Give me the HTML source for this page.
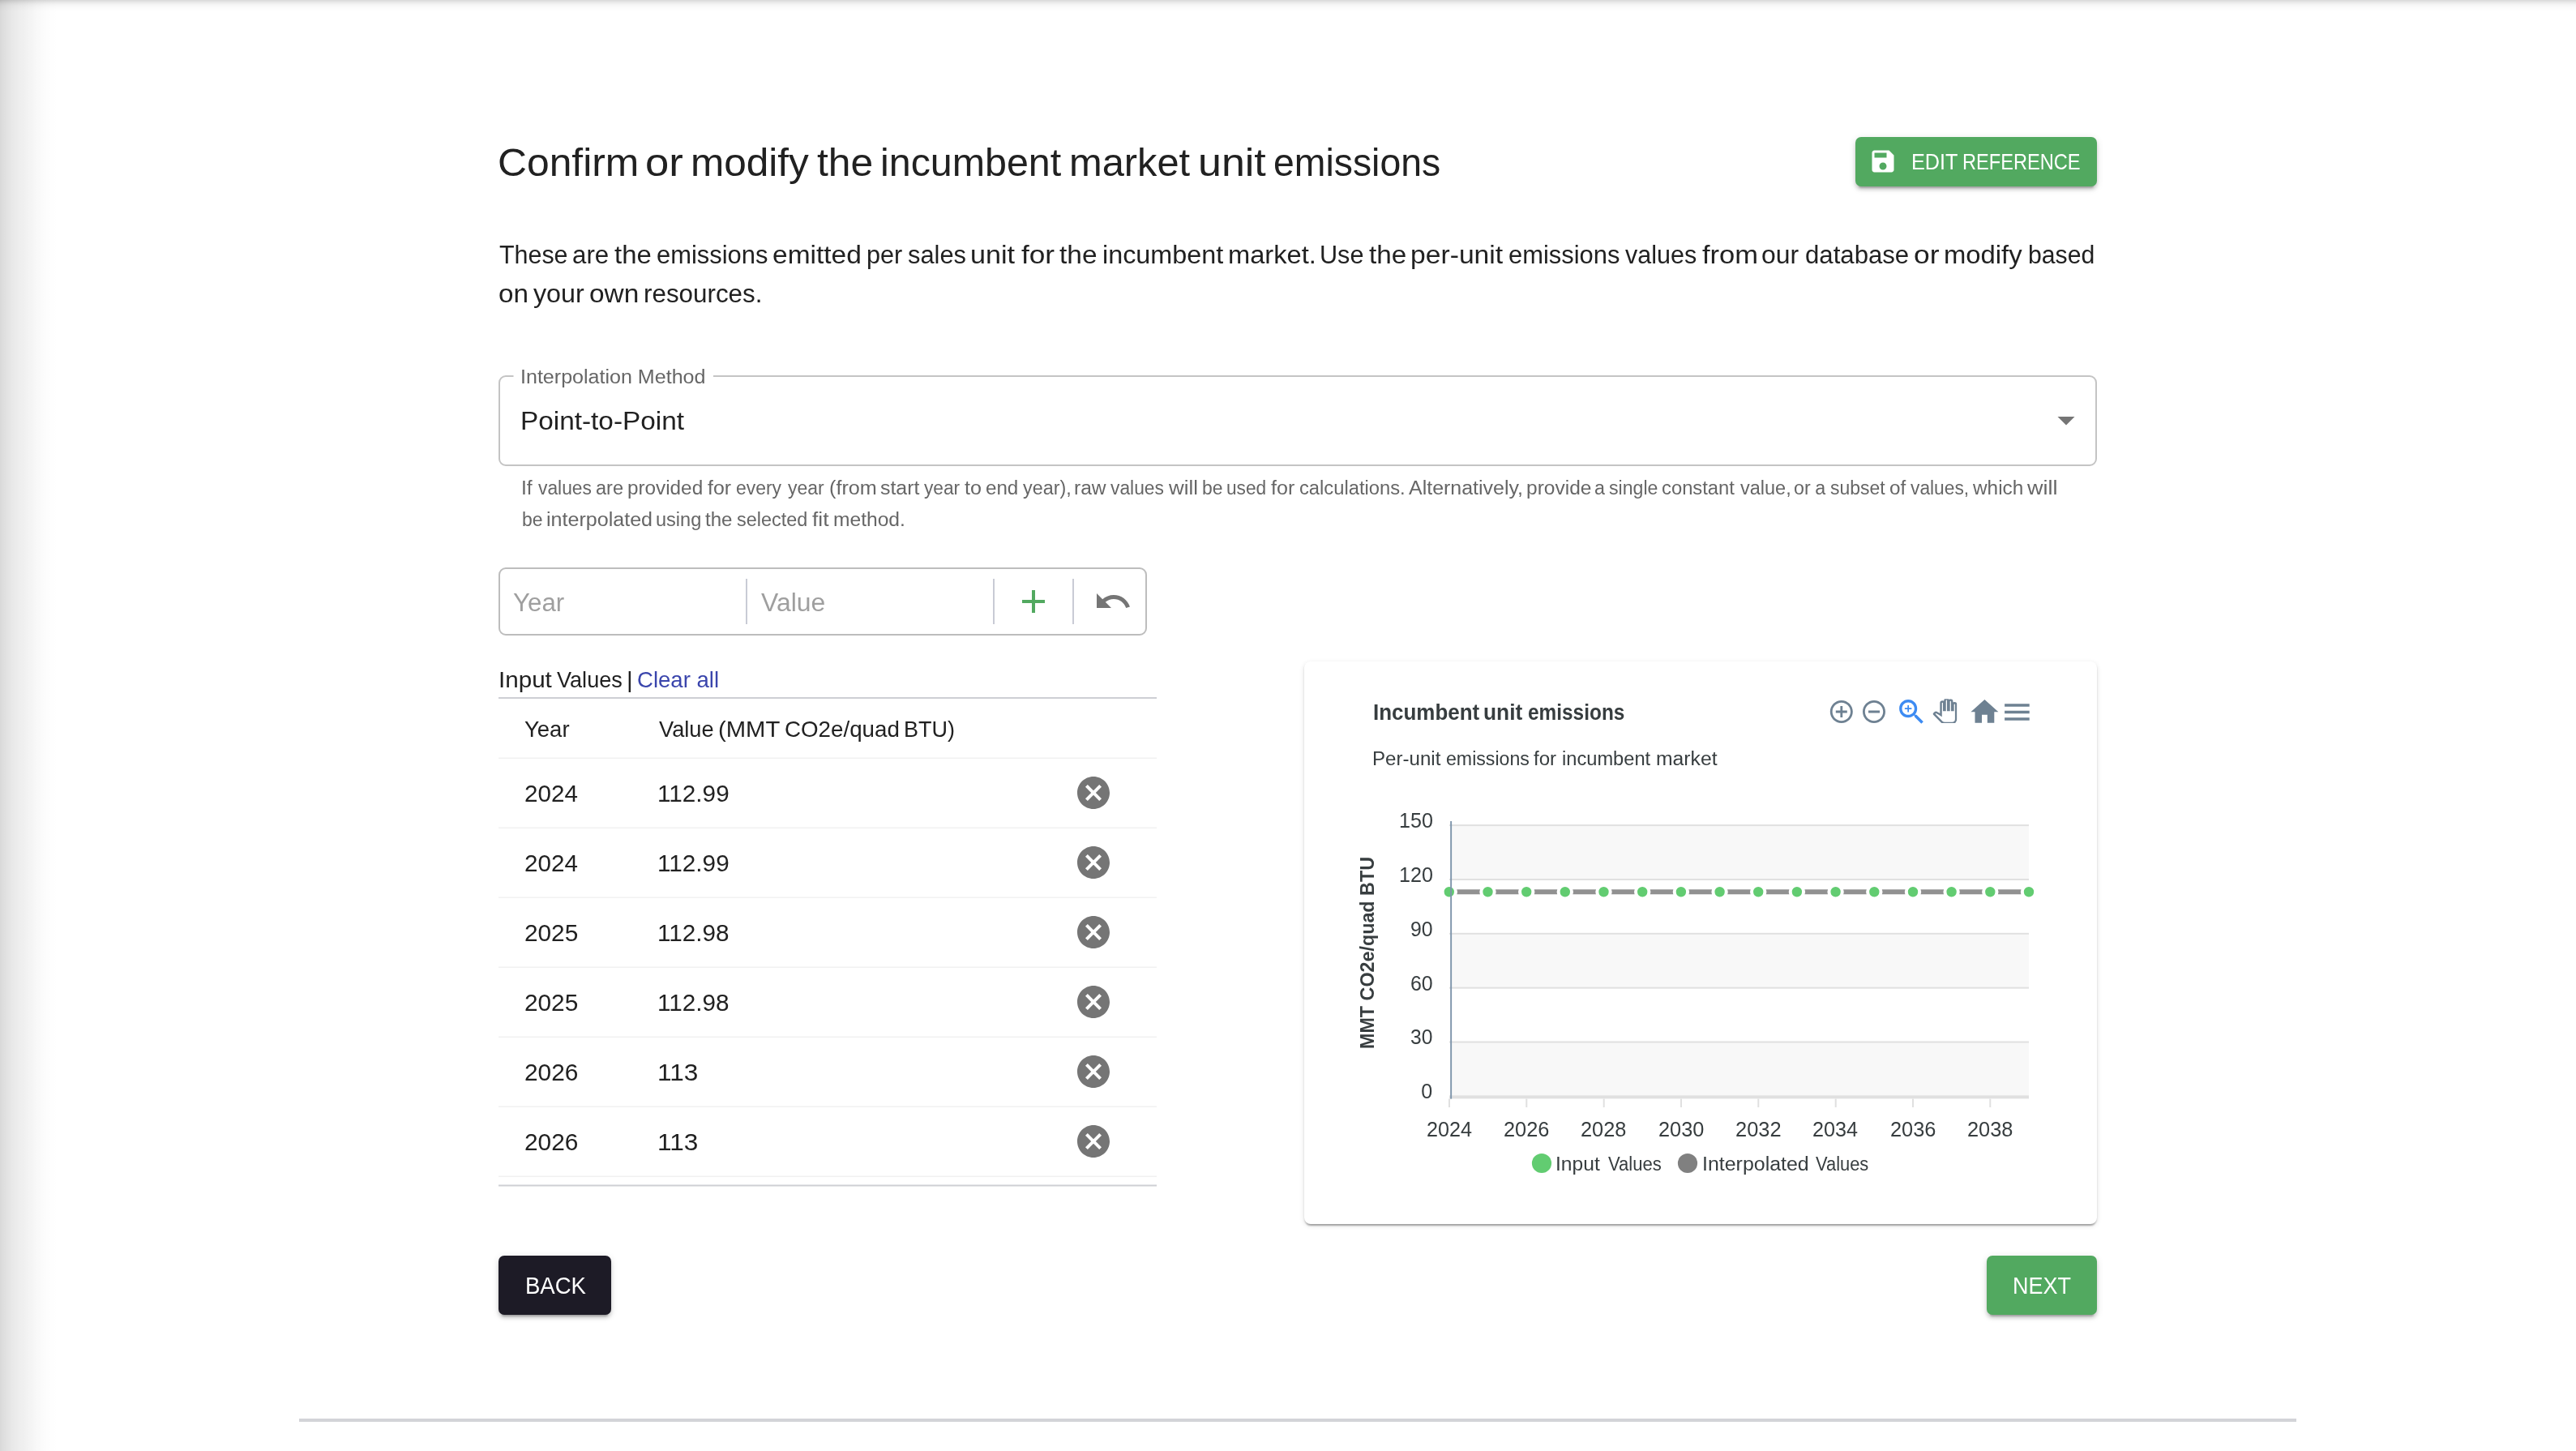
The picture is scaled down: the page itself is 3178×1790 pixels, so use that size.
<!DOCTYPE html>
<html lang="en"><head><meta charset="utf-8"><title>Incumbent market unit emissions</title>
<style>
html,body{margin:0;padding:0;background:#fff;}
body{width:3178px;height:1790px;position:relative;overflow:hidden;font-family:"Liberation Sans", sans-serif;}
.t{position:absolute;white-space:pre;line-height:1;transform-origin:0 0;}
.abs{position:absolute;}
.g{display:contents;margin:0;padding:0;font:inherit;}
#lsh{left:0;top:0;width:80px;height:1790px;background:linear-gradient(to right,rgba(0,0,0,0.1529) 0px,rgba(0,0,0,0.1255) 5px,rgba(0,0,0,0.1098) 10px,rgba(0,0,0,0.0902) 15px,rgba(0,0,0,0.0784) 20px,rgba(0,0,0,0.0667) 25px,rgba(0,0,0,0.0588) 30px,rgba(0,0,0,0.0471) 35px,rgba(0,0,0,0.0392) 40px,rgba(0,0,0,0.0275) 45px,rgba(0,0,0,0.0196) 50px,rgba(0,0,0,0.0118) 55px,rgba(0,0,0,0.0078) 60px,rgba(0,0,0,0.0039) 65px,rgba(0,0,0,0.0000) 72px);}
#tsh{left:0;top:0;width:3178px;height:16px;background:linear-gradient(to bottom,rgba(0,0,0,0.1529) 0px,rgba(0,0,0,0.1294) 1px,rgba(0,0,0,0.1059) 2px,rgba(0,0,0,0.0863) 3px,rgba(0,0,0,0.0667) 4px,rgba(0,0,0,0.0510) 5px,rgba(0,0,0,0.0392) 6px,rgba(0,0,0,0.0314) 7px,rgba(0,0,0,0.0235) 8px,rgba(0,0,0,0.0196) 9px,rgba(0,0,0,0.0157) 10px,rgba(0,0,0,0.0118) 11px,rgba(0,0,0,0.0078) 12px,rgba(0,0,0,0.0039) 13px,rgba(0,0,0,0.0000) 15px);}
.btn{border-radius:7px;box-shadow:0 6px 2px -4px rgba(0,0,0,.2),0 4px 4px 0 rgba(0,0,0,.14),0 2px 10px 0 rgba(0,0,0,.12);}
#card{left:1609px;top:815.5px;width:978px;height:694.5px;border-radius:8px;background:#fff;box-shadow:0 4px 2px -2px rgba(0,0,0,.2),0 2px 2px 0 rgba(0,0,0,.14),0 2px 6px 0 rgba(0,0,0,.12);}
svg{position:absolute;left:0;top:0;}
#txt{position:absolute;left:0;top:0;width:3178px;height:1790px;will-change:transform;}
</style></head>
<body>
<div class="abs" id="lsh"></div>
<div class="abs" id="tsh"></div>
<div class="abs btn" style="left:2289px;top:169px;width:298px;height:61px;background:#52a960"></div>
<div class="abs btn" style="left:615px;top:1549px;width:139px;height:73px;background:#1d1b26"></div>
<div class="abs btn" style="left:2451px;top:1549px;width:136px;height:73px;background:#52a960"></div>
<div class="abs" id="card"></div>
<svg width="3178" height="1790" viewBox="0 0 3178 1790">
<path d="M633.5 464 H624 a8 8 0 0 0 -8 8 V566 a8 8 0 0 0 8 8 H2578 a8 8 0 0 0 8 -8 V472 a8 8 0 0 0 -8 -8 H880" fill="none" stroke="#c4c4c4" stroke-width="2"/>
<path d="M2538.5 514 h21 l-10.5 10.5 z" fill="#757575"/>
<rect x="616" y="701" width="798" height="82" rx="8" fill="none" stroke="#bdbdbd" stroke-width="2"/>
<rect x="920" y="714" width="2" height="56" fill="#c9cbd5"/>
<rect x="1225" y="714" width="2" height="56" fill="#c9cbd5"/>
<rect x="1323" y="714" width="2" height="56" fill="#c9cbd5"/>
<path transform="translate(1251 718) scale(2)" d="M19 13h-6v6h-2v-6H5v-2h6V5h2v6h6v2z" fill="#52a960"/>
<path transform="translate(1349 718) scale(2)" d="M12.5 8c-2.65 0-5.05.99-6.9 2.6L2 7v9h9l-3.62-3.62c1.39-1.16 3.16-1.88 5.12-1.88 3.54 0 6.55 2.31 7.6 5.5l2.37-.78C21.08 11.03 17.15 8 12.5 8z" fill="#757575"/>
<rect x="615" y="860" width="812" height="2" fill="#cecfd4"/>
<rect x="615" y="1461.5" width="812" height="2" fill="#cecfd4"/>
<rect x="615" y="934.5" width="812" height="1.5" fill="#f1f1f1"/>
<rect x="615" y="1020.5" width="812" height="1.5" fill="#f1f1f1"/>
<rect x="615" y="1106.5" width="812" height="1.5" fill="#f1f1f1"/>
<rect x="615" y="1192.5" width="812" height="1.5" fill="#f1f1f1"/>
<rect x="615" y="1278.5" width="812" height="1.5" fill="#f1f1f1"/>
<rect x="615" y="1364.5" width="812" height="1.5" fill="#f1f1f1"/>
<rect x="615" y="1450.5" width="812" height="1.5" fill="#f1f1f1"/>
<path transform="translate(1325 954) scale(2)" d="M12 2C6.47 2 2 6.47 2 12s4.47 10 10 10 10-4.47 10-10S17.53 2 12 2zm5 13.59L15.59 17 12 13.41 8.41 17 7 15.59 10.59 12 7 8.41 8.41 7 12 10.59 15.59 7 17 8.41 13.41 12 17 15.59z" fill="#757575"/>
<path transform="translate(1325 1040) scale(2)" d="M12 2C6.47 2 2 6.47 2 12s4.47 10 10 10 10-4.47 10-10S17.53 2 12 2zm5 13.59L15.59 17 12 13.41 8.41 17 7 15.59 10.59 12 7 8.41 8.41 7 12 10.59 15.59 7 17 8.41 13.41 12 17 15.59z" fill="#757575"/>
<path transform="translate(1325 1126) scale(2)" d="M12 2C6.47 2 2 6.47 2 12s4.47 10 10 10 10-4.47 10-10S17.53 2 12 2zm5 13.59L15.59 17 12 13.41 8.41 17 7 15.59 10.59 12 7 8.41 8.41 7 12 10.59 15.59 7 17 8.41 13.41 12 17 15.59z" fill="#757575"/>
<path transform="translate(1325 1212) scale(2)" d="M12 2C6.47 2 2 6.47 2 12s4.47 10 10 10 10-4.47 10-10S17.53 2 12 2zm5 13.59L15.59 17 12 13.41 8.41 17 7 15.59 10.59 12 7 8.41 8.41 7 12 10.59 15.59 7 17 8.41 13.41 12 17 15.59z" fill="#757575"/>
<path transform="translate(1325 1298) scale(2)" d="M12 2C6.47 2 2 6.47 2 12s4.47 10 10 10 10-4.47 10-10S17.53 2 12 2zm5 13.59L15.59 17 12 13.41 8.41 17 7 15.59 10.59 12 7 8.41 8.41 7 12 10.59 15.59 7 17 8.41 13.41 12 17 15.59z" fill="#757575"/>
<path transform="translate(1325 1384) scale(2)" d="M12 2C6.47 2 2 6.47 2 12s4.47 10 10 10 10-4.47 10-10S17.53 2 12 2zm5 13.59L15.59 17 12 13.41 8.41 17 7 15.59 10.59 12 7 8.41 8.41 7 12 10.59 15.59 7 17 8.41 13.41 12 17 15.59z" fill="#757575"/>
<rect x="369" y="1750" width="2464" height="4" fill="#d3d4d8"/>
<path transform="translate(2305 181.1) scale(1.5)" d="M17 3H5c-1.11 0-2 .9-2 2v14c0 1.1.89 2 2 2h14c1.1 0 2-.9 2-2V7l-4-4zm-5 16c-1.66 0-3-1.34-3-3s1.34-3 3-3 3 1.34 3 3-1.34 3-3 3zm3-10H5V5h10v4z" fill="#fff"/>
<rect x="1790" y="1018.1" width="713" height="66.85" fill="#f8f8f8"/>
<rect x="1790" y="1151.8" width="713" height="66.85" fill="#f8f8f8"/>
<rect x="1790" y="1285.5" width="713" height="66.85" fill="#f8f8f8"/>
<rect x="1788" y="1017.1" width="715" height="2" fill="#e0e0e0"/>
<rect x="1788" y="1083.95" width="715" height="2" fill="#e0e0e0"/>
<rect x="1788" y="1150.8" width="715" height="2" fill="#e0e0e0"/>
<rect x="1788" y="1217.65" width="715" height="2" fill="#e0e0e0"/>
<rect x="1788" y="1284.5" width="715" height="2" fill="#e0e0e0"/>
<rect x="1788" y="1351.35" width="715" height="4" fill="#e0e0e0"/>
<rect x="1787.0" y="1355.5" width="2" height="10.5" fill="#e0e0e0"/>
<rect x="1882.3" y="1355.5" width="2" height="10.5" fill="#e0e0e0"/>
<rect x="1977.7" y="1355.5" width="2" height="10.5" fill="#e0e0e0"/>
<rect x="2073.0" y="1355.5" width="2" height="10.5" fill="#e0e0e0"/>
<rect x="2168.3" y="1355.5" width="2" height="10.5" fill="#e0e0e0"/>
<rect x="2263.7" y="1355.5" width="2" height="10.5" fill="#e0e0e0"/>
<rect x="2359.0" y="1355.5" width="2" height="10.5" fill="#e0e0e0"/>
<rect x="2454.3" y="1355.5" width="2" height="10.5" fill="#e0e0e0"/>
<rect x="1788" y="1097.25" width="715" height="6" fill="#919191"/>
<circle cx="1787.8" cy="1100.25" r="8.2" fill="#62cc71" stroke="#fff" stroke-width="4"/>
<circle cx="1835.5" cy="1100.25" r="8.2" fill="#62cc71" stroke="#fff" stroke-width="4"/>
<circle cx="1883.2" cy="1100.25" r="8.2" fill="#62cc71" stroke="#fff" stroke-width="4"/>
<circle cx="1930.8" cy="1100.25" r="8.2" fill="#62cc71" stroke="#fff" stroke-width="4"/>
<circle cx="1978.5" cy="1100.25" r="8.2" fill="#62cc71" stroke="#fff" stroke-width="4"/>
<circle cx="2026.2" cy="1100.25" r="8.2" fill="#62cc71" stroke="#fff" stroke-width="4"/>
<circle cx="2073.9" cy="1100.25" r="8.2" fill="#62cc71" stroke="#fff" stroke-width="4"/>
<circle cx="2121.6" cy="1100.25" r="8.2" fill="#62cc71" stroke="#fff" stroke-width="4"/>
<circle cx="2169.2" cy="1100.25" r="8.2" fill="#62cc71" stroke="#fff" stroke-width="4"/>
<circle cx="2216.9" cy="1100.25" r="8.2" fill="#62cc71" stroke="#fff" stroke-width="4"/>
<circle cx="2264.6" cy="1100.25" r="8.2" fill="#62cc71" stroke="#fff" stroke-width="4"/>
<circle cx="2312.3" cy="1100.25" r="8.2" fill="#62cc71" stroke="#fff" stroke-width="4"/>
<circle cx="2360.0" cy="1100.25" r="8.2" fill="#62cc71" stroke="#fff" stroke-width="4"/>
<circle cx="2407.6" cy="1100.25" r="8.2" fill="#62cc71" stroke="#fff" stroke-width="4"/>
<circle cx="2455.3" cy="1100.25" r="8.2" fill="#62cc71" stroke="#fff" stroke-width="4"/>
<circle cx="2503.0" cy="1100.25" r="8.2" fill="#62cc71" stroke="#fff" stroke-width="4"/>
<rect x="1789.2" y="1013" width="1.9" height="342.6" fill="#7e95ab"/>
<circle cx="1902" cy="1435" r="12.1" fill="#62cc71"/>
<circle cx="2082" cy="1435" r="12.1" fill="#808080"/>
<g transform="translate(2271.8 878) scale(1.4) translate(-12 -12)"><path fill="#6e8192" d="M13 7h-2v4H7v2h4v4h2v-4h4v-2h-4V7zm-1-5C6.48 2 2 6.48 2 12s4.48 10 10 10 10-4.48 10-10S17.52 2 12 2zm0 18c-4.41 0-8-3.59-8-8s3.59-8 8-8 8 3.59 8 8-3.59 8-8 8z"/></g>
<g transform="translate(2312 878) scale(1.4) translate(-12 -12)"><path fill="#6e8192" d="M7 11v2h10v-2H7zm5-9C6.48 2 2 6.48 2 12s4.48 10 10 10 10-4.48 10-10S17.52 2 12 2zm0 18c-4.41 0-8-3.59-8-8s3.59-8 8-8 8 3.59 8 8-3.59 8-8 8z"/></g>
<g transform="translate(2358.4 878.4) scale(1.7) translate(-12 -12)"><path fill="#3d8bf2" d="M15.5 14h-.79l-.28-.27C15.41 12.59 16 11.11 16 9.5 16 5.91 13.09 3 9.5 3S3 5.91 3 9.5 5.91 16 9.5 16c1.61 0 3.09-.59 4.23-1.57l.27.28v.79l5 4.99L20.49 19l-4.99-5zm-6 0C7.01 14 5 11.99 5 9.5S7.01 5 9.5 5 14 7.01 14 9.5 11.99 14 9.5 14z"/><path fill="#3d8bf2" d="M12 10h-2v2H9v-2H7V9h2V7h1v2h2v1z"/></g>
<g transform="translate(2399.5 877.2) scale(1.24) translate(-12 -12)"><clipPath id="hc"><path d="M0 0h24v24H0z"/></clipPath><path clip-path="url(#hc)" fill="#fff" stroke="#6e8192" stroke-width="2" d="M23 5.5V20c0 2.2-1.8 4-4 4h-7.3c-1.08 0-2.1-.43-2.85-1.19L1 14.83s1.26-1.23 1.3-1.25c.22-.19.49-.29.79-.29.22 0 .42.06.6.16.04.01 4.31 2.46 4.31 2.46V4c0-.83.67-1.5 1.5-1.5S11 3.17 11 4v7h1V1.5c0-.83.67-1.5 1.5-1.5S15 .67 15 1.5V11h1V2.5c0-.83.67-1.5 1.5-1.5s1.5.67 1.5 1.5V11h1V5.5c0-.83.67-1.5 1.5-1.5s1.5.67 1.5 1.5z"/></g>
<g transform="translate(2448.4 878.25) scale(1.7) translate(-12 -12)"><path fill="#6e8192" d="M10 20v-6h4v6h5v-8h3L12 3 2 12h3v8z"/></g>
<g transform="translate(2488.4 878.45) scale(1.7) translate(-12 -12)"><path fill="#6e8192" d="M3 18h18v-2H3v2zm0-5h18v-2H3v2zm0-7v2h18V6H3z"/></g>
</svg>
<div id="txt">
<h1 class="g title">
<span class="t" style="left:614.47px;top:177px;font-size:48.0px;color:#212121;transform:scaleX(1.0374)">Confirm </span>
<span class="t" style="left:796.09px;top:177px;font-size:48.0px;color:#212121;transform:scaleX(1.0961)">or </span>
<span class="t" style="left:851.71px;top:177px;font-size:48.0px;color:#212121;transform:scaleX(1.0319)">modify </span>
<span class="t" style="left:1008.00px;top:177px;font-size:48.0px;color:#212121;transform:scaleX(1.0373)">the </span>
<span class="t" style="left:1086.27px;top:177px;font-size:48.0px;color:#212121;transform:scaleX(1.0074)">incumbent </span>
<span class="t" style="left:1319.26px;top:177px;font-size:48.0px;color:#212121;transform:scaleX(1.0164)">market </span>
<span class="t" style="left:1477.88px;top:177px;font-size:48.0px;color:#212121;transform:scaleX(1.0822)">unit </span>
<span class="t" style="left:1570.53px;top:177px;font-size:48.0px;color:#212121;transform:scaleX(0.9660)">emissions</span>
</h1>
<p class="g lead">
<span class="t" style="left:615.57px;top:299px;font-size:31.04px;color:#212121;transform:scaleX(0.9802)">These </span>
<span class="t" style="left:706.17px;top:299px;font-size:31.04px;color:#212121;transform:scaleX(1.0083)">are </span>
<span class="t" style="left:758.25px;top:299px;font-size:31.04px;color:#212121;transform:scaleX(1.0596)">the </span>
<span class="t" style="left:809.94px;top:299px;font-size:31.04px;color:#212121;transform:scaleX(0.9962)">emissions </span>
<span class="t" style="left:953.08px;top:299px;font-size:31.04px;color:#212121;transform:scaleX(1.0793)">emitted </span>
<span class="t" style="left:1068.78px;top:299px;font-size:31.04px;color:#212121;transform:scaleX(0.9862)">per </span>
<span class="t" style="left:1120.39px;top:299px;font-size:31.04px;color:#212121;transform:scaleX(0.9935)">sales </span>
<span class="t" style="left:1197.29px;top:299px;font-size:31.04px;color:#212121;transform:scaleX(1.0986)">unit </span>
<span class="t" style="left:1259.50px;top:299px;font-size:31.04px;color:#212121;transform:scaleX(1.1345)">for </span>
<span class="t" style="left:1306.99px;top:299px;font-size:31.04px;color:#212121;transform:scaleX(1.0778)">the </span>
<span class="t" style="left:1359.84px;top:299px;font-size:31.04px;color:#212121;transform:scaleX(1.0418)">incumbent </span>
<span class="t" style="left:1515.33px;top:299px;font-size:31.04px;color:#212121;transform:scaleX(1.0526)">market. </span>
<span class="t" style="left:1628.14px;top:299px;font-size:31.04px;color:#212121;transform:scaleX(0.9872)">Use </span>
<span class="t" style="left:1689.00px;top:299px;font-size:31.04px;color:#212121;transform:scaleX(1.0717)">the </span>
<span class="t" style="left:1740.33px;top:299px;font-size:31.04px;color:#212121;transform:scaleX(1.0851)">per-unit </span>
<span class="t" style="left:1861.19px;top:299px;font-size:31.04px;color:#212121;transform:scaleX(0.9962)">emissions </span>
<span class="t" style="left:2004.90px;top:299px;font-size:31.04px;color:#212121;transform:scaleX(0.9834)">values </span>
<span class="t" style="left:2099.51px;top:299px;font-size:31.04px;color:#212121;transform:scaleX(1.1120)">from </span>
<span class="t" style="left:2173.16px;top:299px;font-size:31.04px;color:#212121;transform:scaleX(1.0283)">our </span>
<span class="t" style="left:2227.44px;top:299px;font-size:31.04px;color:#212121;transform:scaleX(1.0040)">database </span>
<span class="t" style="left:2361.01px;top:299px;font-size:31.04px;color:#212121;transform:scaleX(1.1407)">or </span>
<span class="t" style="left:2398.42px;top:299px;font-size:31.04px;color:#212121;transform:scaleX(1.0574)">modify </span>
<span class="t" style="left:2502.45px;top:299px;font-size:31.04px;color:#212121;transform:scaleX(0.9727)">based</span>
<span class="t" style="left:614.90px;top:347px;font-size:31.04px;color:#212121;transform:scaleX(1.0706)">on </span>
<span class="t" style="left:658.12px;top:347px;font-size:31.04px;color:#212121;transform:scaleX(1.0389)">your </span>
<span class="t" style="left:727.20px;top:347px;font-size:31.04px;color:#212121;transform:scaleX(1.0764)">own </span>
<span class="t" style="left:793.92px;top:347px;font-size:31.04px;color:#212121;transform:scaleX(1.0109)">resources.</span>
</p>
<label class="g select-label">
<span class="t" style="left:641.69px;top:454px;font-size:23.28px;color:#666666;transform:scaleX(1.0769)">Interpolation Method</span>
</label>
<div class="g select-value">
<span class="t" style="left:642.26px;top:504px;font-size:31.04px;color:#212121;transform:scaleX(1.0743)">Point-to-Point</span>
</div>
<p class="g helper">
<span class="t" style="left:643.22px;top:591px;font-size:23.28px;color:#666666;transform:scaleX(1.0635)">If </span>
<span class="t" style="left:663.67px;top:591px;font-size:23.28px;color:#666666;transform:scaleX(0.9799)">values </span>
<span class="t" style="left:735.25px;top:591px;font-size:23.28px;color:#666666;transform:scaleX(1.0126)">are </span>
<span class="t" style="left:774.18px;top:591px;font-size:23.28px;color:#666666;transform:scaleX(1.0435)">provided </span>
<span class="t" style="left:872.65px;top:591px;font-size:23.28px;color:#666666;transform:scaleX(1.0687)">for </span>
<span class="t" style="left:907.78px;top:591px;font-size:23.28px;color:#666666;transform:scaleX(0.9847)">every </span>
<span class="t" style="left:971.94px;top:591px;font-size:23.28px;color:#666666;transform:scaleX(0.9874)">year </span>
<span class="t" style="left:1022.94px;top:591px;font-size:23.28px;color:#666666;transform:scaleX(1.0819)">(from </span>
<span class="t" style="left:1085.56px;top:591px;font-size:23.28px;color:#666666;transform:scaleX(1.0691)">start </span>
<span class="t" style="left:1139.94px;top:591px;font-size:23.28px;color:#666666;transform:scaleX(0.9762)">year </span>
<span class="t" style="left:1189.62px;top:591px;font-size:23.28px;color:#666666;transform:scaleX(1.0789)">to </span>
<span class="t" style="left:1216.47px;top:591px;font-size:23.28px;color:#666666;transform:scaleX(1.0378)">end </span>
<span class="t" style="left:1262.44px;top:591px;font-size:23.28px;color:#666666;transform:scaleX(1.0031)">year), </span>
<span class="t" style="left:1324.62px;top:591px;font-size:23.28px;color:#666666;transform:scaleX(1.0556)">raw </span>
<span class="t" style="left:1369.92px;top:591px;font-size:23.28px;color:#666666;transform:scaleX(0.9799)">values </span>
<span class="t" style="left:1442.04px;top:591px;font-size:23.28px;color:#666666;transform:scaleX(1.1125)">will </span>
<span class="t" style="left:1483.02px;top:591px;font-size:23.28px;color:#666666;transform:scaleX(0.9853)">be </span>
<span class="t" style="left:1513.03px;top:591px;font-size:23.28px;color:#666666;transform:scaleX(0.9750)">used </span>
<span class="t" style="left:1567.89px;top:591px;font-size:23.28px;color:#666666;transform:scaleX(1.0781)">for </span>
<span class="t" style="left:1602.74px;top:591px;font-size:23.28px;color:#666666;transform:scaleX(1.0207)">calculations. </span>
<span class="t" style="left:1738.20px;top:591px;font-size:23.28px;color:#666666;transform:scaleX(1.0729)">Alternatively, </span>
<span class="t" style="left:1882.67px;top:591px;font-size:23.28px;color:#666666;transform:scaleX(1.0539)">provide </span>
<span class="t" style="left:1967.04px;top:591px;font-size:23.28px;color:#666666;transform:scaleX(1.0000)">a </span>
<span class="t" style="left:1985.11px;top:591px;font-size:23.28px;color:#666666;transform:scaleX(0.9940)">single </span>
<span class="t" style="left:2050.24px;top:591px;font-size:23.28px;color:#666666;transform:scaleX(1.0226)">constant </span>
<span class="t" style="left:2146.92px;top:591px;font-size:23.28px;color:#666666;transform:scaleX(1.0098)">value, </span>
<span class="t" style="left:2212.78px;top:591px;font-size:23.28px;color:#666666;transform:scaleX(0.9962)">or </span>
<span class="t" style="left:2239.29px;top:591px;font-size:23.28px;color:#666666;transform:scaleX(1.0000)">a </span>
<span class="t" style="left:2257.61px;top:591px;font-size:23.28px;color:#666666;transform:scaleX(0.9855)">subset </span>
<span class="t" style="left:2330.98px;top:591px;font-size:23.28px;color:#666666;transform:scaleX(1.0428)">of </span>
<span class="t" style="left:2357.42px;top:591px;font-size:23.28px;color:#666666;transform:scaleX(0.9784)">values, </span>
<span class="t" style="left:2434.29px;top:591px;font-size:23.28px;color:#666666;transform:scaleX(1.0473)">which </span>
<span class="t" style="left:2501.29px;top:591px;font-size:23.28px;color:#666666;transform:scaleX(1.1613)">will</span>
<span class="t" style="left:643.52px;top:630px;font-size:23.28px;color:#666666;transform:scaleX(0.9853)">be </span>
<span class="t" style="left:673.82px;top:630px;font-size:23.28px;color:#666666;transform:scaleX(1.0778)">interpolated </span>
<span class="t" style="left:808.97px;top:630px;font-size:23.28px;color:#666666;transform:scaleX(1.0122)">using </span>
<span class="t" style="left:870.14px;top:630px;font-size:23.28px;color:#666666;transform:scaleX(1.0337)">the </span>
<span class="t" style="left:908.85px;top:630px;font-size:23.28px;color:#666666;transform:scaleX(1.0058)">selected </span>
<span class="t" style="left:1001.63px;top:630px;font-size:23.28px;color:#666666;transform:scaleX(1.1366)">fit </span>
<span class="t" style="left:1027.87px;top:630px;font-size:23.28px;color:#666666;transform:scaleX(1.0573)">method.</span>
</p>
<div class="g entry-placeholders">
<span class="t" style="left:633.31px;top:728px;font-size:31.04px;color:#9f9f9f;transform:scaleX(1.0081)">Year</span>
<span class="t" style="left:938.66px;top:728px;font-size:31.04px;color:#9f9f9f;transform:scaleX(1.0285)">Value</span>
</div>
<div class="g list-title">
<span class="t" style="left:614.77px;top:825px;font-size:27.16px;color:#212121;transform:scaleX(1.0902)">Input </span>
<span class="t" style="left:686.68px;top:825px;font-size:27.16px;color:#212121;transform:scaleX(0.9973)">Values </span>
<span class="t" style="left:773.15px;top:825px;font-size:27.16px;color:#212121;transform:scaleX(1.0907)">|</span>
<span class="t" style="left:786.30px;top:825px;font-size:27.16px;color:#3a45ac;transform:scaleX(1.0144)">Clear all</span>
</div>
<div class="g table">
<span class="t" style="left:647.40px;top:886px;font-size:27.16px;color:#212121;transform:scaleX(1.0126)">Year</span>
<span class="t" style="left:813.08px;top:886px;font-size:27.16px;color:#212121;transform:scaleX(1.0028)">Value </span>
<span class="t" style="left:885.89px;top:886px;font-size:27.16px;color:#212121;transform:scaleX(1.0763)">(MMT </span>
<span class="t" style="left:967.89px;top:886px;font-size:27.16px;color:#212121;transform:scaleX(1.0216)">CO2e/quad </span>
<span class="t" style="left:1115.48px;top:886px;font-size:27.16px;color:#212121;transform:scaleX(0.9942)">BTU)</span>
<span class="t" style="left:646.51px;top:965px;font-size:29.26px;color:#212121;transform:scaleX(1.0121)">2024</span>
<span class="t" style="left:811.24px;top:965px;font-size:29.26px;color:#212121;transform:scaleX(1.0158)">112.99</span>
<span class="t" style="left:646.51px;top:1051px;font-size:29.26px;color:#212121;transform:scaleX(1.0121)">2024</span>
<span class="t" style="left:811.24px;top:1051px;font-size:29.26px;color:#212121;transform:scaleX(1.0158)">112.99</span>
<span class="t" style="left:646.50px;top:1137px;font-size:29.26px;color:#212121;transform:scaleX(1.0181)">2025</span>
<span class="t" style="left:811.24px;top:1137px;font-size:29.26px;color:#212121;transform:scaleX(1.0144)">112.98</span>
<span class="t" style="left:646.50px;top:1223px;font-size:29.26px;color:#212121;transform:scaleX(1.0181)">2025</span>
<span class="t" style="left:811.24px;top:1223px;font-size:29.26px;color:#212121;transform:scaleX(1.0144)">112.98</span>
<span class="t" style="left:646.50px;top:1309px;font-size:29.26px;color:#212121;transform:scaleX(1.0191)">2026</span>
<span class="t" style="left:811.10px;top:1309px;font-size:29.26px;color:#212121;transform:scaleX(1.0785)">113</span>
<span class="t" style="left:646.50px;top:1395px;font-size:29.26px;color:#212121;transform:scaleX(1.0191)">2026</span>
<span class="t" style="left:811.10px;top:1395px;font-size:29.26px;color:#212121;transform:scaleX(1.0785)">113</span>
</div>
<figure class="g chart">
<span class="t" style="left:1693.66px;top:865px;font-size:28.0px;color:#373d3f;transform:scaleX(0.9272);font-weight:700">Incumbent </span>
<span class="t" style="left:1830.37px;top:865px;font-size:28.0px;color:#373d3f;transform:scaleX(0.9404);font-weight:700">unit </span>
<span class="t" style="left:1884.85px;top:865px;font-size:28.0px;color:#373d3f;transform:scaleX(0.8715);font-weight:700">emissions</span>
<span class="t" style="left:1692.82px;top:925px;font-size:23.28px;color:#373d3f;transform:scaleX(1.0355)">Per-unit </span>
<span class="t" style="left:1783.82px;top:925px;font-size:23.28px;color:#373d3f;transform:scaleX(0.9941)">emissions </span>
<span class="t" style="left:1891.56px;top:925px;font-size:23.28px;color:#373d3f;transform:scaleX(1.0365)">for </span>
<span class="t" style="left:1926.52px;top:925px;font-size:23.28px;color:#373d3f;transform:scaleX(1.0169)">incumbent </span>
<span class="t" style="left:2042.66px;top:925px;font-size:23.28px;color:#373d3f;transform:scaleX(1.0622)">market</span>
<span class="t" style="left:1725.59px;top:1000px;font-size:25.08px;color:#373d3f;transform:scaleX(1.0012)">150</span>
<span class="t" style="left:1725.59px;top:1067px;font-size:25.08px;color:#373d3f;transform:scaleX(1.0012)">120</span>
<span class="t" style="left:1739.84px;top:1134px;font-size:25.08px;color:#373d3f;transform:scaleX(0.9907)">90</span>
<span class="t" style="left:1739.73px;top:1201px;font-size:25.08px;color:#373d3f;transform:scaleX(0.9945)">60</span>
<span class="t" style="left:1740.06px;top:1267px;font-size:25.08px;color:#373d3f;transform:scaleX(0.9823)">30</span>
<span class="t" style="left:1753.28px;top:1334px;font-size:25.08px;color:#373d3f;transform:scaleX(1.0000)">0</span>
<span class="t" style="left:1759.73px;top:1381px;font-size:25.08px;color:#373d3f;transform:scaleX(1.0038)">2024</span>
<span class="t" style="left:1855.06px;top:1381px;font-size:25.08px;color:#373d3f;transform:scaleX(1.0108)">2026</span>
<span class="t" style="left:1950.39px;top:1381px;font-size:25.08px;color:#373d3f;transform:scaleX(1.0105)">2028</span>
<span class="t" style="left:2045.72px;top:1381px;font-size:25.08px;color:#373d3f;transform:scaleX(1.0084)">2030</span>
<span class="t" style="left:2141.04px;top:1381px;font-size:25.08px;color:#373d3f;transform:scaleX(1.0138)">2032</span>
<span class="t" style="left:2236.38px;top:1381px;font-size:25.08px;color:#373d3f;transform:scaleX(1.0038)">2034</span>
<span class="t" style="left:2331.71px;top:1381px;font-size:25.08px;color:#373d3f;transform:scaleX(1.0108)">2036</span>
<span class="t" style="left:2427.04px;top:1381px;font-size:25.08px;color:#373d3f;transform:scaleX(1.0105)">2038</span>
<span class="t" style="left:1919.33px;top:1425px;font-size:23.28px;color:#373d3f;transform:scaleX(1.0581)">Input </span>
<span class="t" style="left:1984.10px;top:1425px;font-size:23.28px;color:#373d3f;transform:scaleX(0.9479)">Values</span>
<span class="t" style="left:2100.00px;top:1425px;font-size:23.28px;color:#373d3f;transform:scaleX(1.0718)">Interpolated </span>
<span class="t" style="left:2240.30px;top:1425px;font-size:23.28px;color:#373d3f;transform:scaleX(0.9406)">Values</span>
<span class="t" style="left:1675.00px;top:1294.26px;font-size:24px;color:#373d3f;font-weight:700;transform:rotate(-90deg) scaleX(0.9713)">MMT CO2e/quad BTU</span>
</figure>
<div class="g buttons">
<span class="t" style="left:2357.73px;top:186px;font-size:27.17px;color:#fff;transform:scaleX(0.9287)">EDIT </span>
<span class="t" style="left:2421.06px;top:186px;font-size:27.17px;color:#fff;transform:scaleX(0.8690)">REFERENCE</span>
<span class="t" style="left:647.54px;top:1572px;font-size:29.26px;color:#fff;transform:scaleX(0.9412)">BACK</span>
<span class="t" style="left:2482.99px;top:1572px;font-size:29.26px;color:#fff;transform:scaleX(0.9221)">NEXT</span>
</div>
</div>
</body></html>
